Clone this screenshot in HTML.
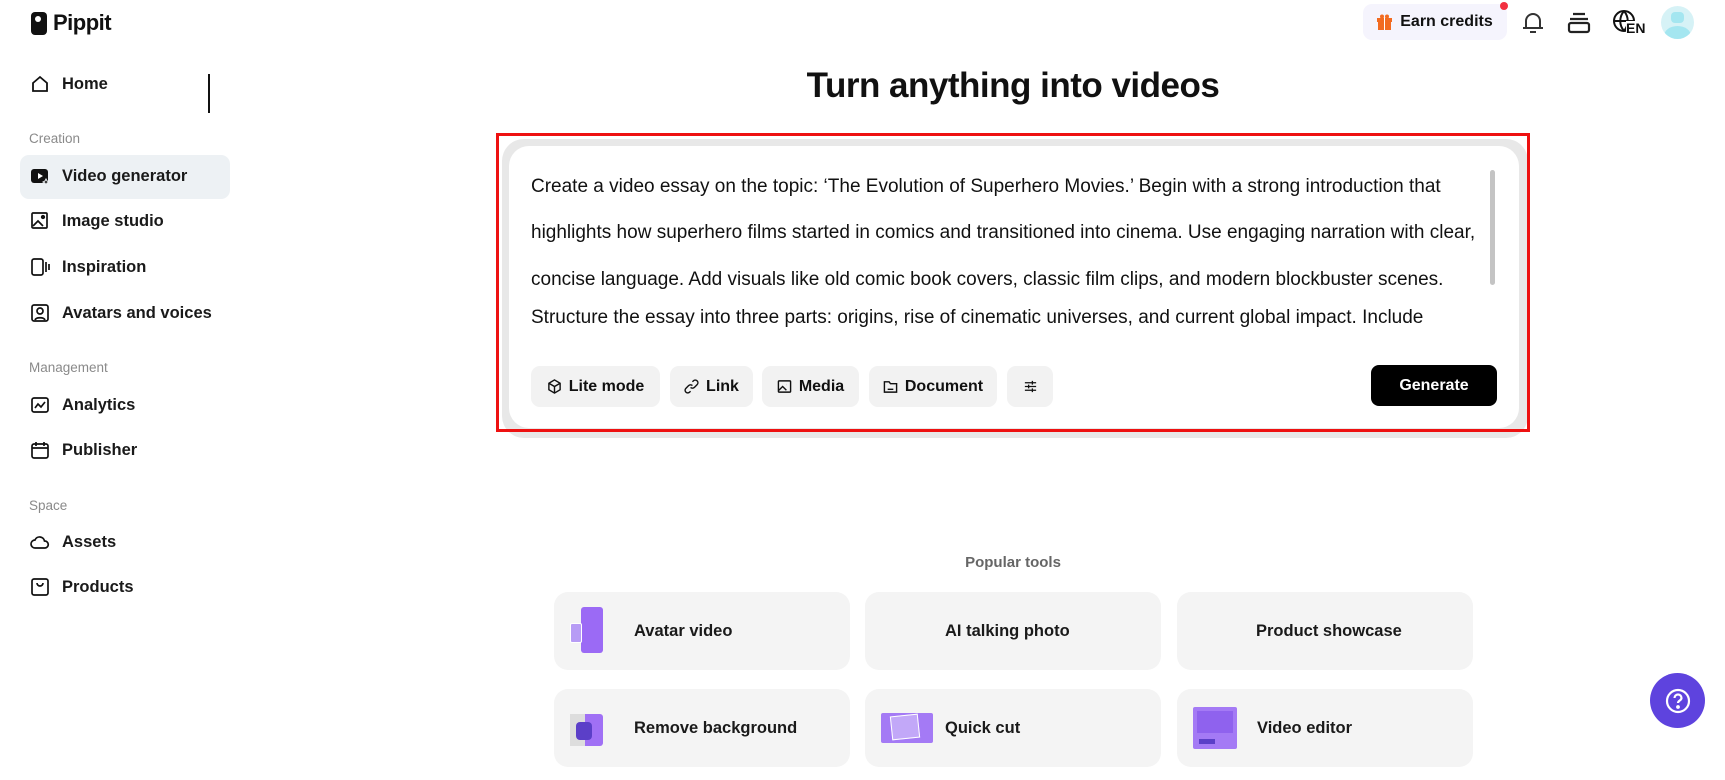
<!DOCTYPE html>
<html><head><meta charset="utf-8"><style>
*{margin:0;padding:0;box-sizing:border-box}
body{width:1725px;height:780px;overflow:hidden;background:#fff;font-family:"Liberation Sans",sans-serif;color:#111;position:relative}
.a{position:absolute}
.nav{position:absolute;left:30px;font-size:16.5px;font-weight:bold;display:flex;align-items:center;gap:12px;color:#1a1a1a}
.nav svg{width:20px;height:20px}
.sec{position:absolute;left:29px;font-size:13.5px;color:#8a8a8a}
.btn{position:absolute;top:366px;height:41px;background:#f2f2f2;border-radius:9px;display:flex;align-items:center;justify-content:center;gap:7px;font-size:16px;font-weight:bold}
.card{position:absolute;width:296px;height:78px;background:#f4f4f4;border-radius:14px;display:flex;align-items:center;font-size:16.5px;font-weight:bold;color:#1a1a1a}
.txt{position:absolute;left:531px;font-size:19px;color:#111;white-space:nowrap}
</style></head><body>
<div class="a" style="left:31px;top:10px;display:flex;align-items:center;gap:6px">
<div style="width:16px;height:23px;background:#111;border-radius:4px;position:relative"><div style="position:absolute;left:4px;top:4px;width:6px;height:6px;border-radius:50%;background:#fff"></div></div>
<span style="font-size:22px;font-weight:bold;letter-spacing:-0.5px">Pippit</span></div>

<div class="nav" style="top:74px"><svg viewBox="0 0 20 20" fill="none" stroke="#111" stroke-width="1.8"><path d="M3 9L10 3l7 6v8H3z"/></svg>Home</div>
<div class="a" style="left:208px;top:74px;width:1.5px;height:39px;background:#111"></div>
<div class="sec" style="top:131px">Creation</div>
<div class="a" style="left:20px;top:155px;width:210px;height:44px;background:#edf1f4;border-radius:9px"></div>
<div class="nav" style="top:166px"><svg viewBox="0 0 20 20"><rect x="1" y="3" width="17" height="14" rx="3" fill="#111"/><path d="M8 7l5 3-5 3z" fill="#fff"/><path d="M16 13l1 2 2 1-2 1-1 2-1-2-2-1 2-1z" fill="#111" stroke="#edf1f4"/></svg>Video generator</div>
<div class="nav" style="top:211px"><svg viewBox="0 0 20 20" fill="none" stroke="#111" stroke-width="1.7"><rect x="2" y="2" width="15" height="15" rx="1"/><path d="M3 15l5-5 5 5"/><circle cx="13" cy="6" r="1.3" fill="#111"/></svg>Image studio</div>
<div class="nav" style="top:257px"><svg viewBox="0 0 20 20" fill="none" stroke="#111" stroke-width="1.7"><rect x="2" y="2" width="11" height="16" rx="2"/><path d="M16 5v10M19 7v6"/></svg>Inspiration</div>
<div class="nav" style="top:303px"><svg viewBox="0 0 20 20" fill="none" stroke="#111" stroke-width="1.7"><rect x="2" y="2" width="16" height="16" rx="2"/><circle cx="10" cy="8" r="3"/><path d="M5 17c1-3 9-3 10 0"/></svg>Avatars and voices</div>
<div class="sec" style="top:360px">Management</div>
<div class="nav" style="top:395px"><svg viewBox="0 0 20 20" fill="none" stroke="#111" stroke-width="1.7"><rect x="2" y="3" width="16" height="14" rx="2"/><path d="M5 13l3-4 3 3 4-5"/></svg>Analytics</div>
<div class="nav" style="top:440px"><svg viewBox="0 0 20 20" fill="none" stroke="#111" stroke-width="1.7"><rect x="2" y="4" width="16" height="14" rx="2"/><path d="M2 8h16M6 2v4M14 2v4"/></svg>Publisher</div>
<div class="sec" style="top:498px">Space</div>
<div class="nav" style="top:532px"><svg viewBox="0 0 20 20" fill="none" stroke="#111" stroke-width="1.7"><path d="M5 16a4 4 0 010-8 5 5 0 019.5 1A3.5 3.5 0 0115 16z"/></svg>Assets</div>
<div class="nav" style="top:577px"><svg viewBox="0 0 20 20" fill="none" stroke="#111" stroke-width="1.7"><rect x="2" y="2" width="16" height="16" rx="2"/><path d="M7 6a3 3 0 006 0"/></svg>Products</div>

<div class="a" style="left:1363px;top:4px;width:144px;height:36px;background:#f5f4fd;border-radius:9px;display:flex;align-items:center;justify-content:center;gap:8px;font-size:16px;font-weight:bold"><svg width="15" height="16" viewBox="0 0 15 16"><rect x="0" y="4" width="15" height="4" fill="#f26b21"/><rect x="1" y="8" width="13" height="8" fill="#f26b21"/><path d="M7.5 4V16" stroke="#fff"/><circle cx="5" cy="2.5" r="2" fill="#f26b21"/><circle cx="10" cy="2.5" r="2" fill="#f26b21"/></svg>Earn credits</div>
<div class="a" style="left:1500px;top:2px;width:8px;height:8px;border-radius:50%;background:#f23040"></div>
<svg class="a" style="left:1520px;top:9px" width="26" height="26" viewBox="0 0 26 26" fill="none" stroke="#333" stroke-width="2"><path d="M6 19V12a7 7 0 0114 0v7zM3 19h20M10 23h6"/></svg>
<svg class="a" style="left:1567px;top:12px" width="24" height="22" viewBox="0 0 24 22" fill="none" stroke="#222" stroke-width="2.2"><path d="M6 2h12M3 7h18"/><rect x="2" y="11" width="20" height="9" rx="2"/></svg>
<svg class="a" style="left:1612px;top:9px" width="26" height="26" viewBox="0 0 26 26" fill="none" stroke="#111" stroke-width="2"><circle cx="12" cy="12" r="10"/><path d="M2 12h20M12 2c-5 6-5 14 0 20M12 2c5 6 5 14 0 20"/></svg>
<div class="a" style="left:1626px;top:21px;font-size:14px;font-weight:bold;background:#fff;line-height:15px">EN</div>
<div class="a" style="left:1661px;top:6px;width:33px;height:33px;border-radius:50%;background:#d6f2f6;overflow:hidden"><div style="position:absolute;left:10px;top:6px;width:13px;height:11px;background:#a4e6f0;border-radius:4px"></div><div style="position:absolute;left:3px;top:20px;width:27px;height:20px;background:#a4e6f0;border-radius:50%"></div></div>

<div class="a" style="left:0;width:2026px;top:66px;text-align:center;font-size:35px;font-weight:bold;letter-spacing:-0.5px">Turn anything into videos</div>

<div class="a" style="left:502px;top:139px;width:1026px;height:299px;background:#e8e8e8;border-radius:22px"></div>
<div class="a" style="left:509px;top:146px;width:1010px;height:282px;background:#fff;border-radius:20px"></div>
<div class="a" style="left:496px;top:133px;width:1034px;height:299px;border:3px solid #ee1111"></div>
<div class="a" style="left:1490px;top:170px;width:5px;height:115px;background:#c4c4c4;border-radius:3px"></div>
<div class="txt" style="top:176px">Create a video essay on the topic: ‘The Evolution of Superhero Movies.’ Begin with a strong introduction that</div>
<div class="txt" style="top:222px">highlights how superhero films started in comics and transitioned into cinema. Use engaging narration with clear,</div>
<div class="txt" style="top:269px">concise language. Add visuals like old comic book covers, classic film clips, and modern blockbuster scenes.</div>
<div class="txt" style="top:307px">Structure the essay into three parts: origins, rise of cinematic universes, and current global impact. Include</div>

<div class="btn" style="left:531px;width:129px"><svg width="15" height="15" viewBox="0 0 16 16" fill="none" stroke="#111" stroke-width="1.5"><path d="M8 1l6 3.5v7L8 15l-6-3.5v-7zM2 4.5L8 8l6-3.5M8 8v7"/></svg>Lite mode</div>
<div class="btn" style="left:670px;width:83px"><svg width="15" height="15" viewBox="0 0 16 16" fill="none" stroke="#111" stroke-width="1.5"><path d="M7 9a3 3 0 004 0l3-3a2.8 2.8 0 00-4-4L9 3M9 7a3 3 0 00-4 0L2 10a2.8 2.8 0 004 4l1-1"/></svg>Link</div>
<div class="btn" style="left:762px;width:97px"><svg width="15" height="15" viewBox="0 0 16 16" fill="none" stroke="#111" stroke-width="1.5"><rect x="1.5" y="2" width="13" height="12" rx="1"/><path d="M2 12l4-4 4 4M10 6h.1"/></svg>Media</div>
<div class="btn" style="left:869px;width:128px"><svg width="15" height="15" viewBox="0 0 16 16" fill="none" stroke="#111" stroke-width="1.5"><path d="M1.5 3h5l1.5 2h6.5v9h-13z"/><path d="M5 11h6"/></svg>Document</div>
<div class="btn" style="left:1007px;width:46px"><svg width="15" height="15" viewBox="0 0 16 16" fill="none" stroke="#111" stroke-width="1.4"><path d="M2 4h12M2 8h12M2 12h12M10 2v4M6 6v4M10 10v4"/></svg></div>
<div class="a" style="left:1371px;top:365px;width:126px;height:41px;background:#000;color:#fff;border-radius:8px;display:flex;align-items:center;justify-content:center;font-size:16px;font-weight:bold">Generate</div>

<div class="a" style="left:0;width:2026px;top:554px;text-align:center;font-size:15px;color:#666;font-weight:bold">Popular tools</div>

<div class="card" style="left:554px;top:592px"><div style="position:relative;width:44px;height:48px;margin:0 20px 0 16px"><div style="position:absolute;left:11px;top:0;width:22px;height:46px;background:#9b6af5;border-radius:3px"></div><div style="position:absolute;left:0;top:16px;width:12px;height:20px;background:#b79cf5;border:1px solid #fff;border-radius:2px"></div></div>Avatar video</div>
<div class="card" style="left:865px;top:592px;padding-left:80px">AI talking photo</div>
<div class="card" style="left:1177px;top:592px;padding-left:79px">Product showcase</div>
<div class="card" style="left:554px;top:689px"><div style="position:relative;width:44px;height:36px;margin:0 20px 0 16px"><div style="position:absolute;left:0;top:4px;width:16px;height:32px;background:#ddd"></div><div style="position:absolute;left:15px;top:4px;width:18px;height:32px;background:#a070f5;border-radius:0 3px 3px 0"></div><div style="position:absolute;left:6px;top:12px;width:16px;height:18px;background:#5b3fc8;border-radius:4px"></div></div>Remove background</div>
<div class="card" style="left:865px;top:689px"><div style="position:relative;width:52px;height:30px;margin:0 12px 0 16px;background:#a47af5;border-radius:2px"><div style="position:absolute;left:10px;top:2px;width:28px;height:24px;background:#c2a8f8;border:1px solid #fff;transform:rotate(-6deg)"></div></div>Quick cut</div>
<div class="card" style="left:1177px;top:689px"><div style="position:relative;width:44px;height:42px;margin:0 20px 0 16px;background:#a47af5;border-radius:2px"><div style="position:absolute;left:4px;top:4px;width:36px;height:22px;background:#8f62ee"></div><div style="position:absolute;left:6px;top:32px;width:16px;height:5px;background:#5b3fc8"></div></div>Video editor</div>

<div class="a" style="left:1650px;top:673px;width:55px;height:55px;border-radius:50%;background:#5e43de;display:flex;align-items:center;justify-content:center"><svg width="26" height="26" viewBox="0 0 26 26" fill="none" stroke="#fff" stroke-width="2.2"><circle cx="13" cy="13" r="11"/><path d="M9.5 10a3.5 3.5 0 117 0c0 2.5-3.5 2.5-3.5 5"/><circle cx="13" cy="19" r=".8" fill="#fff"/></svg></div>
</body></html>
